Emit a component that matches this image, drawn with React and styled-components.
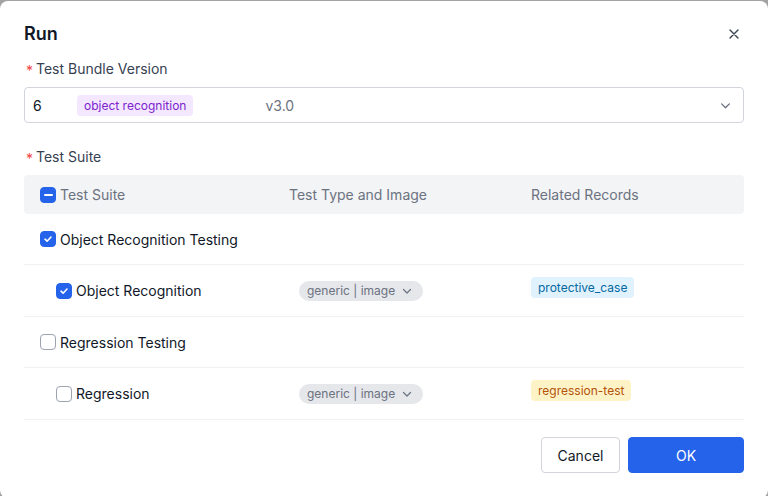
import React, { useState } from 'react';
import styled, { createGlobalStyle } from 'styled-components';

const GlobalStyle = createGlobalStyle`
  html, body {
    margin: 0;
    padding: 0;
    background: #a3a3a3;
    font-family: Inter, "Noto Sans", "Liberation Sans", sans-serif;
    -webkit-font-smoothing: antialiased;
  }
  * { box-sizing: border-box; }
`;

const Overlay = styled.div`
  width: 768px;
  height: 496px;
  overflow: hidden;
  padding-top: 1px;
`;

const Dialog = styled.div`
  width: 768px;
  height: 497px;
  background: #fff;
  border-radius: 8px;
  padding: 19px 24px 0 24px;
  display: flex;
  flex-direction: column;
`;

const Header = styled.div`
  display: flex;
  align-items: center;
  justify-content: space-between;
  height: 28px;
`;

const Title = styled.h2`
  margin: 0;
  font-size: 18px;
  font-weight: 600;
  color: #111827;
  line-height: 28px;
`;

const CloseButton = styled.button`
  border: none;
  background: none;
  padding: 0;
  width: 20px;
  height: 20px;
  display: flex;
  align-items: center;
  justify-content: center;
  color: #374151;
  cursor: pointer;
`;

const Label = styled.div`
  display: flex;
  align-items: center;
  height: 20px;
  font-size: 14px;
  line-height: 20px;
  color: #374151;
  margin-top: ${({ $top }) => $top}px;
  margin-bottom: 8px;

  &::before {
    content: '*';
    color: #ef4444;
    font-size: 14px;
    position: relative;
    top: 2px;
    margin: 0 3px 0 2px;
  }
`;

const Select = styled.div`
  height: 36px;
  border: 1px solid #d1d5db;
  border-radius: 4px;
  display: flex;
  align-items: center;
  padding: 0 12px 0 8px;
  font-size: 14px;
  color: #111827;
`;

const SelectValue = styled.span`
  width: 44px;
`;

const Version = styled.span`
  color: #6b7280;
  margin-left: 72px;
  flex: 1;
`;

const Tag = styled.span`
  display: inline-flex;
  align-items: center;
  height: 21px;
  padding: 0 7px;
  border-radius: 4px;
  font-size: 12px;
  background: ${({ $bg }) => $bg};
  color: ${({ $fg }) => $fg};
`;

const RecordTag = styled(Tag)`
  margin-top: -7px;
`;

const Table = styled.div`
  display: flex;
  flex-direction: column;
`;

const Row = styled.div`
  display: grid;
  grid-template-columns: 249px 242px 1fr;
  align-items: center;
  padding-left: 16px;
  min-height: ${({ $h }) => $h || 51}px;
  border-bottom: 1px solid #f0f1f3;
  font-size: 14px;
  color: #111827;
`;

const HeadRow = styled(Row)`
  background: #f3f4f6;
  border-radius: 4px;
  border-bottom: none;
  color: #6b7280;
  min-height: 39px;
`;

const Cell = styled.div`
  display: flex;
  align-items: center;
  gap: 4px;
  padding-left: ${({ $indent }) => ($indent ? 16 : 0)}px;
`;

const Box = styled.span`
  width: 16px;
  height: 16px;
  border-radius: 4px;
  display: inline-flex;
  align-items: center;
  justify-content: center;
  flex: none;
  background: ${({ $on }) => ($on ? '#2563eb' : '#fff')};
  border: 1px solid ${({ $on }) => ($on ? '#2563eb' : '#9ca3af')};
`;

const Dash = styled.span`
  width: 9px;
  height: 2px;
  background: #fff;
  border-radius: 1px;
`;

const Pill = styled.span`
  display: inline-flex;
  align-items: center;
  gap: 7px;
  height: 20px;
  padding: 0 11px 0 8px;
  margin-left: 10px;
  border-radius: 10px;
  background: #e5e7eb;
  color: #6b7280;
  font-size: 12px;
  width: fit-content;
`;

const Footer = styled.div`
  display: flex;
  justify-content: flex-end;
  gap: 8px;
  margin-top: 17px;
`;

const Button = styled.button`
  height: 36px;
  border-radius: 4px;
  font-family: inherit;
  font-size: 14px;
  cursor: pointer;
  border: 1px solid ${({ $primary }) => ($primary ? '#2563eb' : '#d1d5db')};
  background: ${({ $primary }) => ($primary ? '#2563eb' : '#fff')};
  color: ${({ $primary }) => ($primary ? '#fff' : '#111827')};
  width: ${({ $w }) => $w}px;
`;

const Chevron = ({ size = 10, color = '#6b7280' }) => (
  <svg width={size} height={size} viewBox="0 0 10 10" fill="none">
    <path d="M1.5 3.5 L5 7 L8.5 3.5" stroke={color} strokeWidth="1.2" strokeLinecap="round" strokeLinejoin="round" />
  </svg>
);

const Check = ({ on, mixed }) => (
  <Box $on={on || mixed}>
    {on && (
      <svg width="10" height="10" viewBox="0 0 10 10" fill="none">
        <path d="M2 5.2 L4.1 7.2 L8 3" stroke="#fff" strokeWidth="1.6" strokeLinecap="round" strokeLinejoin="round" />
      </svg>
    )}
    {mixed && <Dash />}
  </Box>
);

const rows = [
  { name: 'Object Recognition Testing', on: true },
  {
    name: 'Object Recognition',
    on: true,
    child: true,
    tag: { text: 'protective_case', bg: '#e0f2fe', fg: '#0369a1' },
  },
  { name: 'Regression Testing', on: false },
  {
    name: 'Regression',
    on: false,
    child: true,
    tag: { text: 'regression-test', bg: '#fef3c7', fg: '#b45309' },
  },
];

const App = () => {
  const [items] = useState(rows);

  return (
    <Overlay>
      <GlobalStyle />
      <Dialog>
        <Header>
          <Title>Run</Title>
          <CloseButton aria-label="close">
            <svg width="10" height="10" viewBox="0 0 10 10" fill="none">
              <path d="M1 1 L9 9 M9 1 L1 9" stroke="#374151" strokeWidth="1.4" strokeLinecap="round" />
            </svg>
          </CloseButton>
        </Header>

        <Label $top={11}>Test Bundle Version</Label>
        <Select>
          <SelectValue>6</SelectValue>
          <Tag $bg="#f3e8ff" $fg="#7e22ce">object recognition</Tag>
          <Version>v3.0</Version>
          <Chevron size={11} />
        </Select>

        <Label $top={24}>Test Suite</Label>
        <Table>
          <HeadRow>
            <Cell>
              <Check mixed />
              Test Suite
            </Cell>
            <Cell>Test Type and Image</Cell>
            <Cell>Related Records</Cell>
          </HeadRow>
          {items.map((r) => (
            <Row key={r.name} $h={r.child ? 52 : 51}>
              <Cell $indent={r.child}>
                <Check on={r.on} />
                {r.name}
              </Cell>
              <Cell>
                {r.child && (
                  <Pill>
                    generic | image
                    <Chevron size={10} />
                  </Pill>
                )}
              </Cell>
              <Cell>
                {r.tag && <RecordTag $bg={r.tag.bg} $fg={r.tag.fg}>{r.tag.text}</RecordTag>}
              </Cell>
            </Row>
          ))}
        </Table>

        <Footer>
          <Button $w={79}>Cancel</Button>
          <Button $primary $w={116}>OK</Button>
        </Footer>
      </Dialog>
    </Overlay>
  );
};

export default App;
